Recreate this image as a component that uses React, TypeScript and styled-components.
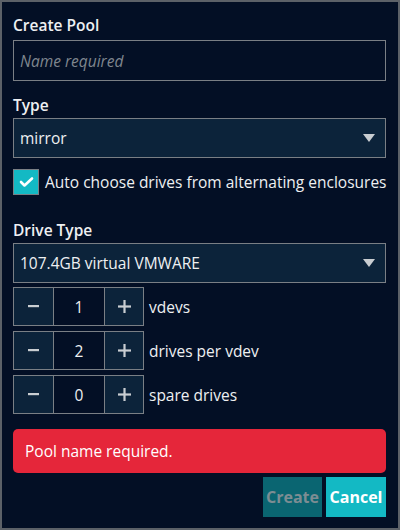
import React, { useState } from "react";
import styled, { createGlobalStyle } from "styled-components";

const Global = createGlobalStyle`
  html, body { margin: 0; padding: 0; background: #030f25; }
  * { box-sizing: border-box; }
`;

const Panel = styled.div`
  width: 400px;
  height: 530px;
  background: #030f25;
  border: 2px solid #5c6168;
  padding: 11px 12px 0 11px;
  font-family: "Open Sans", "Noto Sans", sans-serif;
  font-size: 15.5px;
  color: #eef0f2;
  display: flex;
  flex-direction: column;
`;

const Title = styled.div`
  font-weight: 600;
  font-size: 15.5px;
  line-height: 24px;
  margin-bottom: 3px;
`;

const Label = styled.div<{ $top: number }>`
  font-weight: 600;
  font-size: 15.5px;
  line-height: 24px;
  margin-top: ${(p) => p.$top}px;
  margin-bottom: 1px;
`;

const TextInput = styled.input`
  height: 41px;
  width: 100%;
  background: #030f25;
  border: 1px solid #7a7f85;
  color: #eef0f2;
  font-family: inherit;
  font-size: 15.5px;
  padding: 0 6px;
  outline: none;
  &::placeholder {
    color: #7f868e;
    font-style: italic;
  }
`;

const SelectBox = styled.div`
  height: 40px;
  background: #0c233a;
  border: 1px solid #7a7f85;
  display: flex;
  align-items: center;
  justify-content: space-between;
  padding: 0 10px 0 6px;
`;

const Arrow = styled.span`
  width: 0;
  height: 0;
  border-left: 6px solid transparent;
  border-right: 6px solid transparent;
  border-top: 8px solid #c9cdd1;
`;

const CheckRow = styled.label`
  display: flex;
  align-items: center;
  gap: 6px;
  margin-top: 11px;
  height: 26px;
  white-space: nowrap;
`;

const CheckBox = styled.span`
  width: 26px;
  height: 26px;
  background: #13b9c4;
  border: 1px solid #7a7f85;
  display: flex;
  align-items: center;
  justify-content: center;
  flex: none;
`;

const Steppers = styled.div`
  display: flex;
  flex-direction: column;
  gap: 5px;
  margin-top: 4px;
`;

const StepRow = styled.div`
  display: flex;
  align-items: center;
  gap: 5px;
`;

const Stepper = styled.div`
  display: flex;
  height: 39px;
  border: 1px solid #7a7f85;
`;

const StepBtn = styled.button<{ $w: number }>`
  width: ${(p) => p.$w}px;
  background: #0c233a;
  border: none;
  padding: 0;
  display: flex;
  align-items: center;
  justify-content: center;
`;

const StepValue = styled.div`
  width: 52px;
  background: #030f25;
  border-left: 1px solid #7a7f85;
  border-right: 1px solid #7a7f85;
  display: flex;
  align-items: center;
  justify-content: center;
`;

const Alert = styled.div`
  margin-top: 15px;
  height: 44px;
  background: #e5263a;
  border-radius: 5px;
  display: flex;
  align-items: center;
  padding: 0 12px;
  color: #fff;
`;

const Actions = styled.div`
  display: flex;
  justify-content: flex-end;
  gap: 4px;
  margin-top: 4px;
`;

const ActionBtn = styled.button<{ $primary?: boolean; $w: number }>`
  height: 40px;
  width: ${(p) => p.$w}px;
  border: none;
  padding: 0;
  font-family: inherit;
  font-size: 16px;
  font-weight: 700;
  background: ${(p) => (p.$primary ? "#13b9c4" : "#0a6571")};
  color: ${(p) => (p.$primary ? "#ffffff" : "#7d8d93")};
`;

const Minus = () => (
  <svg width="11" height="3" viewBox="0 0 11 3">
    <rect x="0" y="0" width="11" height="2.2" fill="#c9cdd1" />
  </svg>
);

const Plus = () => (
  <svg width="13" height="13" viewBox="0 0 13 13">
    <rect x="0" y="5.4" width="13" height="2.2" fill="#c9cdd1" />
    <rect x="5.4" y="0" width="2.2" height="13" fill="#c9cdd1" />
  </svg>
);

const rows = [
  { v: 1, label: "vdevs" },
  { v: 2, label: "drives per vdev" },
  { v: 0, label: "spare drives" },
];

export default function App() {
  const [name, setName] = useState("");
  return (
    <>
      <Global />
      <Panel>
        <Title>Create Pool</Title>
        <TextInput placeholder="Name required" value={name} onChange={(e) => setName(e.target.value)} />
        <Label $top={12}>Type</Label>
        <SelectBox>
          <span>mirror</span>
          <Arrow />
        </SelectBox>
        <CheckRow>
          <CheckBox>
            <svg width="15" height="12" viewBox="0 0 15 12">
              <path d="M2 6 L5.5 9.5 L13 2.5" fill="none" stroke="#ffffff" strokeWidth="2.6" strokeLinecap="round" strokeLinejoin="round" />
            </svg>
          </CheckBox>
          <span>Auto choose drives from alternating enclosures</span>
        </CheckRow>
        <Label $top={23}>Drive Type</Label>
        <SelectBox>
          <span>107.4GB virtual VMWARE</span>
          <Arrow />
        </SelectBox>
        <Steppers>
          {rows.map((r) => (
            <StepRow key={r.label}>
              <Stepper>
                <StepBtn $w={39}><Minus /></StepBtn>
                <StepValue>{r.v}</StepValue>
                <StepBtn $w={38}><Plus /></StepBtn>
              </Stepper>
              <span>{r.label}</span>
            </StepRow>
          ))}
        </Steppers>
        <Alert>Pool name required.</Alert>
        <Actions>
          <ActionBtn $w={59}>Create</ActionBtn>
          <ActionBtn $w={60} $primary>Cancel</ActionBtn>
        </Actions>
      </Panel>
    </>
  );
}
